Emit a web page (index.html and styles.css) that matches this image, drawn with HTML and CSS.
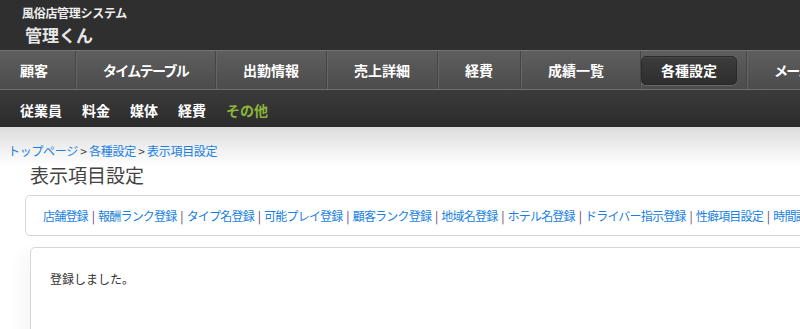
FILE: index.html
```html
<!DOCTYPE html>
<html lang="ja">
<head>
    <meta charset="UTF-8">
    <title>管理くん</title>
    <link rel="stylesheet" href="styles.css">
</head>
<body>
    <div class="header">
        <div class="site-sub">風俗店管理システム</div>
        <div class="site-name">管理くん</div>
    </div>

    <ul class="main-nav">
        <li class="first"><a href="#">顧客</a></li>
        <li class="kana"><a href="#">タイムテーブル</a></li>
        <li><a href="#">出勤情報</a></li>
        <li><a href="#">売上詳細</a></li>
        <li><a href="#">経費</a></li>
        <li><a href="#">成績一覧</a></li>
        <li class="active"><a href="#">各種設定</a></li>
        <li class="kana"><a href="#">メール設定</a></li>
    </ul>

    <ul class="sub-nav">
        <li><a href="#">従業員</a></li>
        <li><a href="#">料金</a></li>
        <li><a href="#">媒体</a></li>
        <li><a href="#">経費</a></li>
        <li class="current"><a href="#">その他</a></li>
    </ul>

    <div class="content">
        <div class="breadcrumb">
            <a href="#">トップページ</a> &gt; <a href="#">各種設定</a> &gt; <a href="#">表示項目設定</a>
        </div>
        <h1 class="page-title">表示項目設定</h1>

        <div class="link-box">
            <a href="#">店舗登録</a> | <a href="#">報酬ランク登録</a> | <a href="#">タイプ名登録</a> | <a href="#">可能プレイ登録</a> | <a href="#">顧客ランク登録</a> | <a href="#">地域名登録</a> | <a href="#">ホテル名登録</a> | <a href="#">ドライバー指示登録</a> | <a href="#">性癖項目設定</a> | <a href="#">時間設定</a>
        </div>

        <!-- 結果メッセージ -->
        <div class="message-box">
            <p>登録しました。</p>
        </div>
    </div>
</body>
</html>
```

FILE: styles.css
```css
body {
    margin: 0;
    font-family: "Noto Sans CJK JP", "Liberation Sans", sans-serif;
    background-color: #fff;
    overflow: hidden;
    width: 800px;
    height: 329px;
}

a {
    text-decoration: none;
}

ul {
    list-style: none;
    margin: 0;
    padding: 0;
}

/* ヘッダー */
.header {
    height: 50px;
    background-color: #2f2f2f;
    padding: 4px 0 0 22px;
    box-sizing: border-box;
    color: #f0f0f0;
}

.site-sub {
    font-size: 12px;
    font-weight: bold;
    line-height: 18px;
    letter-spacing: -0.3px;
}

.site-name {
    font-size: 17px;
    font-weight: bold;
    line-height: 25px;
    margin-left: 3px;
    color: #e6e6e6;
}

/* メインメニュー */
.main-nav {
    display: flex;
    height: 38px;
    white-space: nowrap;
    background: linear-gradient(#5e5e5e, #4c4c4c);
    border-top: 1px solid #747474;
    border-bottom: 1px solid #6e6e6e;
}

.main-nav li {
    display: flex;
    align-items: center;
    padding: 0 27px;
    border-left: 1px solid #454545;
    box-shadow: inset 1px 0 0 #656565;
    position: relative;
}

.main-nav li.first {
    padding-left: 20px;
    border-left: none;
    box-shadow: none;
}

.main-nav li.kana a {
    letter-spacing: -1.7px;
}

.main-nav a {
    color: #fff;
    font-size: 14px;
    font-weight: bold;
}

.main-nav li.active {
    padding: 0 20px;
    margin: 0 9px;
}

.main-nav li.active + li {
    margin-left: 0;
}

.main-nav li.active::before {
    content: "";
    position: absolute;
    left: 0;
    right: 0;
    top: 5px;
    bottom: 4px;
    background: linear-gradient(#3c3c3c, #2e2e2e);
    border: 1px solid #2a2a2a;
    border-radius: 5px;
    box-shadow: inset 0 1px 0 #474747, 0 1px 0 #666;
}

.main-nav li.active a {
    position: relative;
}

/* サブメニュー */
.sub-nav {
    display: flex;
    gap: 20px;
    height: 37px;
    align-items: center;
    padding-left: 20px;
    background: linear-gradient(#3b3b3b, #2b2b2b);
}

.sub-nav a {
    color: #fff;
    font-size: 14px;
    font-weight: bold;
}

.sub-nav li.current a {
    color: #8db43c;
}

/* コンテンツ */
.content {
    background: linear-gradient(#dcdcdc, #f4f4f4 26px, #fff 40px);
    padding: 16px 0 0 0;
    width: 830px;
}

.breadcrumb {
    font-size: 12px;
    line-height: 16px;
    color: #444;
    padding-left: 8px;
    letter-spacing: -0.3px;
}

.breadcrumb a {
    color: #1a7fe0;
}

.page-title {
    margin: 3px 0 0 30px;
    font-size: 19px;
    font-weight: normal;
    line-height: 26px;
    color: #444;
}

.link-box {
    margin: 7px 0 0 25px;
    height: 41px;
    box-sizing: border-box;
    border: 1px solid #d6d6d6;
    border-radius: 5px;
    padding: 0 0 0 17px;
    font-size: 12px;
    line-height: 39px;
    white-space: nowrap;
    overflow: hidden;
    color: #5a3a6e;
    letter-spacing: -0.8px;
    word-spacing: 2px;
}

.link-box a {
    color: #1a7fe0;
}

.message-box {
    margin: 11px 0 0 30px;
    height: 120px;
    border: 1px solid #d6d6d6;
    border-radius: 5px;
    box-shadow: -10px 6px 16px rgba(0, 0, 0, 0.03);
    padding: 22px 19px;
}

.message-box p {
    margin: 0;
    font-size: 12px;
    color: #333;
}
```
